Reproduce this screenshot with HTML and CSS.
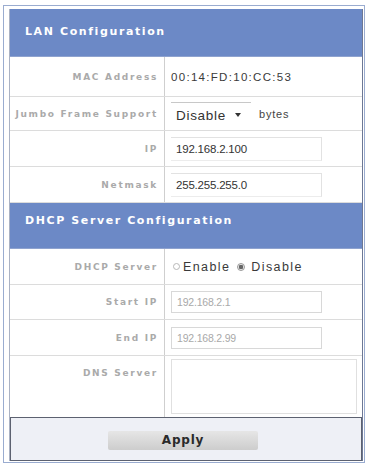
FILE: index.html
```html
<!DOCTYPE html>
<html>
<head>
<meta charset="utf-8">
<link rel="stylesheet" href="styles.css">
</head>
<body>
<div class="frame">
  <div class="panel">
    <div class="head head-lan">LAN Configuration</div>
    <div class="row r-mac"><div class="lbl">MAC Address</div><div class="val"><span class="mac">00:14:FD:10:CC:53</span></div></div>
    <div class="row r-jumbo"><div class="lbl">Jumbo Frame Support</div><div class="val"><span class="select">Disable<span class="arrow"></span></span><span class="unit">bytes</span></div></div>
    <div class="row r-ip"><div class="lbl">IP</div><div class="val"><span class="input">192.168.2.100</span></div></div>
    <div class="row r-ip"><div class="lbl">Netmask</div><div class="val"><span class="input">255.255.255.0</span></div></div>
    <div class="head head-dhcp">DHCP Server Configuration</div>
    <div class="row r-dhcp"><div class="lbl">DHCP Server</div><div class="val"><span class="radio"></span><span class="opt">Enable</span><span class="radio on"></span><span class="opt">Disable</span></div></div>
    <div class="row r-start"><div class="lbl">Start IP</div><div class="val"><span class="input dim">192.168.2.1</span></div></div>
    <div class="row r-end"><div class="lbl">End IP</div><div class="val"><span class="input dim">192.168.2.99</span></div></div>
    <div class="row r-dns"><div class="lbl top">DNS Server</div><div class="val top"><span class="area"></span></div></div>
    <div class="apply-row"><span class="btn">Apply</span></div>
  </div>
</div>
</body>
</html>
```

FILE: styles.css
```css
html, body { margin: 0; padding: 0; background: #ffffff; }
body { width: 368px; height: 468px; overflow: hidden; font-family: "Liberation Sans", Arial, sans-serif; }

.frame {
  margin: 5px 3px 0 3px;
  width: 362px;
  height: 458px;
  box-sizing: border-box;
  border: 1px solid #9aacd0;
  padding: 3px 1px 0 5px;
}

.panel {
  width: 354px;
  box-sizing: border-box;
  border-right: 1px solid #6d7895;
  border-left: 1px solid #aab2c4;
  background: #fff;
}

.head {
  background: #6c89c6;
  color: #ffffff;
  font-family: "DejaVu Sans", Verdana, sans-serif;
  font-weight: bold;
  font-size: 11px;
  letter-spacing: 1.6px;
  padding-left: 15px;
  display: flex;
  align-items: center;
  box-sizing: border-box;
  border-bottom: 1px solid #8fa3cf;
}
.head-lan { height: 48px; padding-bottom: 2px; }
.head-dhcp { height: 46px; padding-bottom: 10px; }

.row {
  display: grid;
  grid-template-columns: 155px 1fr;
  box-sizing: border-box;
  border-bottom: 1px solid #dcdcdc;
}
.r-mac { height: 40px; }
.r-jumbo { height: 34px; }
.r-ip { height: 36px; }
.r-dhcp { height: 36px; }
.r-start { height: 35px; }
.r-end { height: 36px; }
.r-dns { height: 61px; border-bottom: none; }

.lbl {
  border-right: 1px solid #cfcfcf;
  display: flex;
  align-items: center;
  justify-content: flex-end;
  padding-right: 6px;
  font-family: "DejaVu Sans", Verdana, sans-serif;
  font-weight: bold;
  font-size: 9px;
  letter-spacing: 1.7px;
  color: #aaaaaa;
  white-space: nowrap;
}
.lbl.top { align-items: flex-start; padding-top: 12px; }

.val {
  display: flex;
  align-items: center;
  padding-left: 6px;
  color: #333;
  font-size: 12px;
}
.val.top { align-items: flex-start; padding-top: 3px; }

.mac { letter-spacing: 1.3px; font-size: 11.5px; color: #3a3a3a; }

.select {
  display: inline-flex;
  align-items: center;
  height: 26px;
  margin-top: 2px;
  padding-left: 5px;
  width: 80px;
  box-sizing: border-box;
  border-top: 1px solid #c8c8c8;
  font-size: 13.5px;
  letter-spacing: 0.7px;
  color: #333;
}
.arrow {
  display: inline-block;
  width: 0; height: 0;
  margin-left: 9px;
  border-left: 3.5px solid transparent;
  border-right: 3.5px solid transparent;
  border-top: 4px solid #333;
}
.unit { margin-left: 8px; font-size: 11px; letter-spacing: 0.8px; color: #444; }

.input {
  display: flex;
  align-items: center;
  width: 151px;
  height: 24px;
  box-sizing: border-box;
  padding-left: 5px;
  border-top: 1px solid #e2e2e2;
  border-right: 1px solid #e2e2e2;
  border-bottom: 1px solid #ececec;
  font-size: 11.5px;
  letter-spacing: -0.2px;
  color: #333;
}
.input.dim {
  border: 1px solid #d8d8d8;
  height: 22px;
  color: #a9a9a9;
  font-size: 10.5px;
}

.radio {
  display: inline-block;
  width: 7px; height: 7px;
  border-radius: 50%;
  border: 1px solid #b8b8b8;
  box-sizing: border-box;
  margin-left: 2px;
  margin-right: 3px;
}
.radio.on {
  margin-left: 7px;
  margin-right: 6px;
  background: radial-gradient(circle, #666 0 2px, #e8e8e8 2.5px);
  border-color: #999;
  width: 8px; height: 8px;
}
.opt { font-size: 12.5px; letter-spacing: 1.4px; color: #3a3a3a; }

.area {
  display: block;
  width: 186px;
  height: 55px;
  box-sizing: border-box;
  border: 1px solid #e0e0e0;
}

.apply-row {
  height: 44px;
  box-sizing: border-box;
  border: 1px solid #5c6170;
  background: #eef0f6;
  display: flex;
  align-items: center;
  justify-content: center;
  padding-right: 6px;
}
.btn {
  display: flex;
  align-items: center;
  justify-content: center;
  width: 150px;
  height: 19px;
  margin-top: 2px;
  background: linear-gradient(#e6e6e6, #cdcdcd);
  border-radius: 2px;
  font-family: "DejaVu Sans", Verdana, sans-serif;
  font-weight: bold;
  font-size: 12px;
  letter-spacing: 0.8px;
  color: #2a2a2a;
}
```
